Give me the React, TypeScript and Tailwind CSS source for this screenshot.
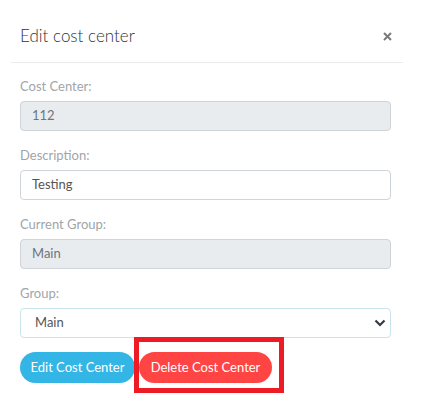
import React from 'react';

const font = { fontFamily: 'Lato, "Open Sans", "Liberation Sans", sans-serif' };

const Field: React.FC<{ label: string; children: React.ReactNode }> = ({ label, children }) => (
  <div className="mb-[14px]">
    <label className="block h-[20px] text-[13px] leading-[20px] text-[#a0a5aa] mb-[5px]">{label}</label>
    {children}
  </div>
);

const App: React.FC = () => {
  return (
    <div className="relative w-[426px] h-[414px] bg-white overflow-hidden" style={font}>
      {/* header */}
      <div className="flex items-center justify-between h-[62px] pt-[10px] pl-5 pr-[34px]">
        <h4 className="text-[17px] font-light text-[#333]">Edit cost center</h4>
        <button className="w-[10px] h-[10px] flex items-center justify-center">
          <svg width="9" height="9" viewBox="0 0 9 9">
            <path d="M1 1L8 8M8 1L1 8" stroke="#7a7a7a" strokeWidth="2" />
          </svg>
        </button>
      </div>
      <div className="mx-[11px] w-[392px] h-px bg-[#e9ecef]" />

      {/* body */}
      <div className="pl-5 pt-[13px] w-[391px]">
        <Field label="Cost Center:">
          <div className="h-[30px] flex items-center px-[11px] bg-[#e9ecef] border border-[#ced4da] rounded-[4px] text-[13px] text-[#6c757d]">
            112
          </div>
        </Field>
        <Field label="Description:">
          <div className="h-[30px] flex items-center px-[11px] bg-white border border-[#ced4da] rounded-[4px] text-[13px] text-[#555]">
            Testing
          </div>
        </Field>
        <Field label="Current Group:">
          <div className="h-[30px] flex items-center px-[11px] bg-[#e9ecef] border border-[#ced4da] rounded-[4px] text-[13px] text-[#6c757d]">
            Main
          </div>
        </Field>
        <Field label="Group:">
          <div className="h-[30px] flex items-center justify-between pl-[14px] pr-[4px] bg-white border border-[#c9e4ee] rounded-[4px] text-[13px] text-[#555]">
            <span>Main</span>
            <svg width="12" height="8" viewBox="0 0 12 8">
              <path d="M1.5 1.5L6 6L10.5 1.5" fill="none" stroke="#343a40" strokeWidth="2.2" />
            </svg>
          </div>
        </Field>

        <div className="flex gap-[4px]">
          <button className="w-[115px] h-[31px] rounded-full bg-[#33b5e5] text-white text-[13px]">
            Edit Cost Center
          </button>
          <button className="w-[133px] h-[31px] rounded-full bg-[#ff4444] text-white text-[13px]">
            Delete Cost Center
          </button>
        </div>
      </div>

      {/* annotation box */}
      <div className="absolute left-[134px] top-[337px] w-[150px] h-[56px] border-[5px] border-[#ed1c24]" />
    </div>
  );
};

export default App;
